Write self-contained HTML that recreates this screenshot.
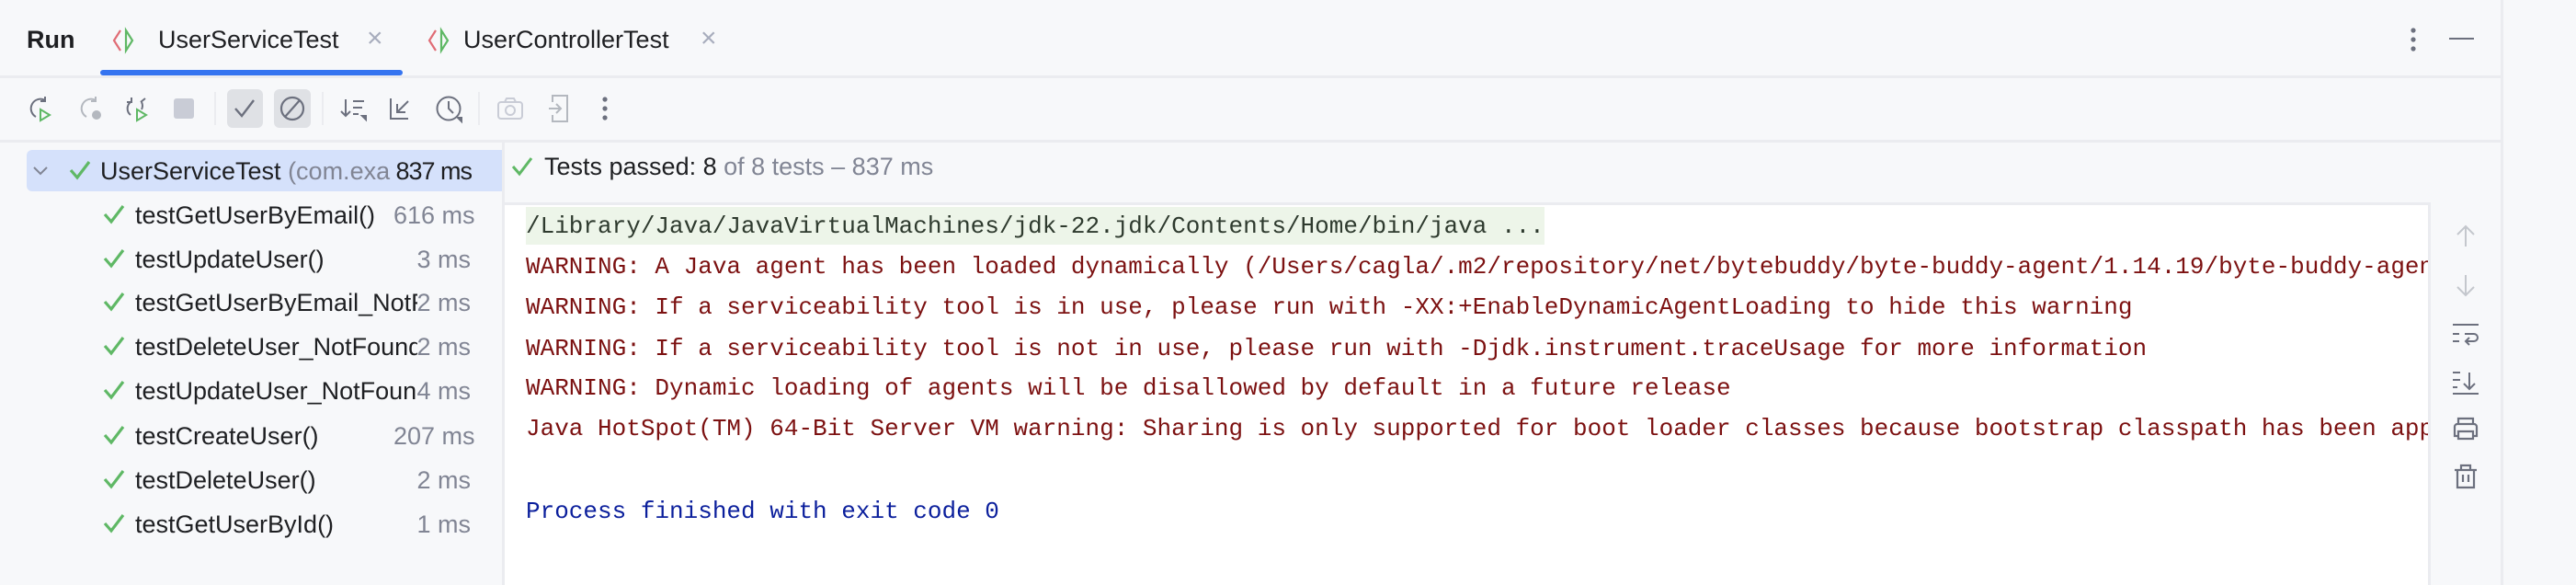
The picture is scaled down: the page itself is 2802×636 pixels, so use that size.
<!DOCTYPE html>
<html><head><meta charset="utf-8"><style>
*{margin:0;padding:0;box-sizing:border-box}
body{width:2802px;height:636px;background:#f7f8fa;position:relative;overflow:hidden;font-family:"Liberation Sans",sans-serif;color:#1e1f22}
.a{position:absolute;white-space:nowrap}
.ui{font-size:27px;line-height:32px}
.hl{position:absolute;background:#ebecf0}
.mono{font-family:"Liberation Mono",monospace;font-size:26px;line-height:30px}
.red{color:#7c1111}
.gray{color:#818594}
svg{position:absolute;overflow:visible}
.clip{overflow:hidden}
</style></head><body>
<!-- header -->
<div class="a ui" style="left:29px;top:27px;font-weight:bold">Run</div>
<svg style="left:122px;top:30px" width="26" height="28" viewBox="0 0 26 28"><path d="M9 3 L2 14 L9 25" fill="none" stroke="#e06c75" stroke-width="2.2"/><path d="M15 3 L22 14 L15 25 Z" fill="none" stroke="#5fb865" stroke-width="2.2"/></svg>
<div class="a ui" style="left:172px;top:27px">UserServiceTest</div>
<div class="a ui gray" style="left:399px;top:26px;font-size:30px;color:#a8adbd">×</div>
<div class="a" style="left:109px;top:76px;width:329px;height:6px;background:#3574f0;border-radius:3px"></div>
<svg style="left:465px;top:30px" width="26" height="28" viewBox="0 0 26 28"><path d="M9 3 L2 14 L9 25" fill="none" stroke="#e06c75" stroke-width="2.2"/><path d="M15 3 L22 14 L15 25 Z" fill="none" stroke="#5fb865" stroke-width="2.2"/></svg>
<div class="a ui" style="left:504px;top:27px">UserControllerTest</div>
<div class="a ui gray" style="left:762px;top:26px;font-size:30px;color:#a8adbd">×</div>
<svg style="left:2620px;top:29px" width="10" height="30"><circle cx="5" cy="4" r="2.6" fill="#6c707e"/><circle cx="5" cy="14" r="2.6" fill="#6c707e"/><circle cx="5" cy="24" r="2.6" fill="#6c707e"/></svg>
<div class="a" style="left:2664px;top:41px;width:27px;height:2px;background:#6c707e"></div>
<div class="hl" style="left:0;top:82px;width:2721px;height:3px"></div>
<div class="hl" style="left:2720px;top:0;width:3px;height:636px"></div>
<div class="a" style="left:2723px;top:0;width:79px;height:636px;background:#f7f8fa"></div>
<!-- toolbar -->
<div class="a" style="left:247px;top:97px;width:39px;height:42px;background:#dfe1e5;border-radius:6px"></div>
<div class="a" style="left:298px;top:97px;width:40px;height:42px;background:#dfe1e5;border-radius:6px"></div>
<div class="hl" style="left:233px;top:100px;width:2px;height:36px"></div>
<div class="hl" style="left:350px;top:100px;width:2px;height:36px"></div>
<div class="hl" style="left:520px;top:100px;width:2px;height:36px"></div>
<svg style="left:29px;top:103px" width="30" height="30" viewBox="0 0 30 30" fill="none" stroke-width="2"><path d="M20 6 A10 10 0 1 0 10 24" stroke="#6c707e"/><path d="M20 2 V7 H15" stroke="#6c707e"/><path d="M15 16 L25 22 L15 28 Z" stroke="#5fb865"/></svg>
<svg style="left:84px;top:103px" width="30" height="30" viewBox="0 0 30 30" fill="none" stroke-width="2" stroke="#b4b8bf"><path d="M20 6 A10 10 0 1 0 10 24"/><path d="M20 2 V7 H15"/><circle cx="21" cy="22" r="4" fill="#b4b8bf"/></svg>
<svg style="left:134px;top:103px" width="30" height="30" viewBox="0 0 30 30" fill="none" stroke-width="2"><path d="M8 22 A9 9 0 0 1 8 8 M4 8 H9 V3 M20 8 A9 9 0 0 1 20 16 M24 4 L19 8" stroke="#6c707e"/><path d="M15 16 L25 22 L15 28 Z" stroke="#5fb865"/></svg>
<div class="a" style="left:189px;top:107px;width:22px;height:22px;background:#c9ccd6;border-radius:3px"></div>
<svg style="left:254px;top:106px" width="26" height="24" fill="none" stroke="#6c707e" stroke-width="2.4"><path d="M2 12 L9 20 L22 3"/></svg>
<svg style="left:304px;top:104px" width="28" height="28" fill="none" stroke="#6c707e" stroke-width="2.2"><circle cx="14" cy="14" r="12"/><path d="M6 23 L22 5"/></svg>
<svg style="left:370px;top:104px" width="32" height="30" fill="none" stroke="#6c707e" stroke-width="2"><path d="M6 4 V22 M1 17 L6 22 L11 17 M14 6 H26 M14 13 H24 M14 20 H20"/><path d="M24 22 L28 22 L28 26 Z" fill="#6c707e"/></svg>
<svg style="left:422px;top:104px" width="28" height="28" fill="none" stroke="#6c707e" stroke-width="2"><path d="M3 3 V25 H22 M10 18 L22 6 M10 9 V18 H19"/></svg>
<svg style="left:473px;top:103px" width="32" height="32" fill="none" stroke="#6c707e" stroke-width="2"><circle cx="15" cy="15" r="12.5"/><path d="M15 7 V15 L20 20"/><path d="M25 25 L29 25 L29 29 Z" fill="#6c707e"/></svg>
<svg style="left:540px;top:104px" width="30" height="28" fill="none" stroke="#c9ccd6" stroke-width="2"><rect x="2" y="7" width="26" height="18" rx="3"/><path d="M9 7 L11 3 H19 L21 7"/><circle cx="15" cy="16" r="5"/></svg>
<svg style="left:595px;top:101px" width="28" height="34" fill="none" stroke="#b4b8bf" stroke-width="2"><path d="M6 10 V3 H22 V31 H6 V24 M2 17 H14 M10 12 L15 17 L10 22"/></svg>
<svg style="left:653px;top:104px" width="10" height="28"><circle cx="5" cy="4" r="2.6" fill="#6c707e"/><circle cx="5" cy="14" r="2.6" fill="#6c707e"/><circle cx="5" cy="24" r="2.6" fill="#6c707e"/></svg>
<div class="hl" style="left:0;top:152px;width:2721px;height:3px"></div>
<!-- tree -->
<div class="hl" style="left:546px;top:155px;width:3px;height:481px"></div>
<div class="a" style="left:29px;top:163px;width:517px;height:45px;background:#d5e1fb;border-radius:6px 0 0 6px"></div>
<svg style="left:36px;top:180px" width="16" height="12" fill="none" stroke="#818594" stroke-width="2"><path d="M1 2 L8 9 L15 2"/></svg>
<div class="a ui clip" style="left:109px;top:170px;width:317px">UserServiceTest <span class="gray">(com.example)</span></div>
<div class="a ui" style="left:420px;top:170px;width:93px;text-align:right;letter-spacing:-1px">837 ms</div>
<svg style="left:75px;top:174px" width="24" height="22" fill="none" stroke="#5fb865" stroke-width="3.2"><path d="M2 11 L9 19 L22 2"/></svg>

<div class="a ui clip" style="left:147px;top:218px;width:300px">testGetUserByEmail()</div><div class="a ui gray" style="left:428px;top:218px;width:84px;text-align:right">616 ms</div>
<div class="a ui clip" style="left:147px;top:266px;width:300px">testUpdateUser()</div><div class="a ui gray" style="left:428px;top:266px;width:84px;text-align:right">3 ms</div>
<div class="a ui clip" style="left:147px;top:313px;width:307px">testGetUserByEmail_NotFound()</div><div class="a ui gray" style="left:428px;top:313px;width:84px;text-align:right">2 ms</div>
<div class="a ui clip" style="left:147px;top:361px;width:307px">testDeleteUser_NotFound()</div><div class="a ui gray" style="left:428px;top:361px;width:84px;text-align:right">2 ms</div>
<div class="a ui clip" style="left:147px;top:409px;width:307px">testUpdateUser_NotFound()</div><div class="a ui gray" style="left:428px;top:409px;width:84px;text-align:right">4 ms</div>
<div class="a ui clip" style="left:147px;top:458px;width:300px">testCreateUser()</div><div class="a ui gray" style="left:428px;top:458px;width:84px;text-align:right">207 ms</div>
<div class="a ui clip" style="left:147px;top:506px;width:300px">testDeleteUser()</div><div class="a ui gray" style="left:428px;top:506px;width:84px;text-align:right">2 ms</div>
<div class="a ui clip" style="left:147px;top:554px;width:300px">testGetUserById()</div><div class="a ui gray" style="left:428px;top:554px;width:84px;text-align:right">1 ms</div>
<svg style="left:112px;top:222px" width="24" height="22" fill="none" stroke="#5fb865" stroke-width="3.2"><path d="M2 11 L9 19 L22 2"/></svg>
<svg style="left:112px;top:270px" width="24" height="22" fill="none" stroke="#5fb865" stroke-width="3.2"><path d="M2 11 L9 19 L22 2"/></svg>
<svg style="left:112px;top:317px" width="24" height="22" fill="none" stroke="#5fb865" stroke-width="3.2"><path d="M2 11 L9 19 L22 2"/></svg>
<svg style="left:112px;top:365px" width="24" height="22" fill="none" stroke="#5fb865" stroke-width="3.2"><path d="M2 11 L9 19 L22 2"/></svg>
<svg style="left:112px;top:413px" width="24" height="22" fill="none" stroke="#5fb865" stroke-width="3.2"><path d="M2 11 L9 19 L22 2"/></svg>
<svg style="left:112px;top:462px" width="24" height="22" fill="none" stroke="#5fb865" stroke-width="3.2"><path d="M2 11 L9 19 L22 2"/></svg>
<svg style="left:112px;top:510px" width="24" height="22" fill="none" stroke="#5fb865" stroke-width="3.2"><path d="M2 11 L9 19 L22 2"/></svg>
<svg style="left:112px;top:558px" width="24" height="22" fill="none" stroke="#5fb865" stroke-width="3.2"><path d="M2 11 L9 19 L22 2"/></svg>
<!-- status -->
<svg style="left:556px;top:170px" width="24" height="22" fill="none" stroke="#5fb865" stroke-width="3"><path d="M2 11 L9 19 L22 2"/></svg>
<div class="a ui" style="left:592px;top:165px">Tests passed: 8 <span class="gray">of 8 tests – 837 ms</span></div>
<!-- console -->
<div class="hl" style="left:549px;top:220px;width:2095px;height:3px"></div>
<div class="a clip" style="left:549px;top:223px;width:2092px;height:413px;background:#fff">
<div class="a" style="left:23px;top:2px;width:1108px;height:41px;background:#edf5e9"></div>
<div class="a mono" style="left:23px;top:8px;color:#2e3a2e">/Library/Java/JavaVirtualMachines/jdk-22.jdk/Contents/Home/bin/java ...</div>
<div class="a mono red" style="left:23px;top:52px">WARNING: A Java agent has been loaded dynamically (/Users/cagla/.m2/repository/net/bytebuddy/byte-buddy-agent/1.14.19/byte-buddy-agent-1.14.19.jar)</div>
<div class="a mono red" style="left:23px;top:96px">WARNING: If a serviceability tool is in use, please run with -XX:+EnableDynamicAgentLoading to hide this warning</div>
<div class="a mono red" style="left:23px;top:141px">WARNING: If a serviceability tool is not in use, please run with -Djdk.instrument.traceUsage for more information</div>
<div class="a mono red" style="left:23px;top:184px">WARNING: Dynamic loading of agents will be disallowed by default in a future release</div>
<div class="a mono red" style="left:23px;top:228px">Java HotSpot(TM) 64-Bit Server VM warning: Sharing is only supported for boot loader classes because bootstrap classpath has been appended</div>
<div class="a mono" style="left:23px;top:318px;color:#0b1f9c">Process finished with exit code 0</div>
</div>
<div class="hl" style="left:2641px;top:223px;width:3px;height:413px"></div>
<!-- right gutter icons -->
<svg style="left:2670px;top:244px" width="24" height="26" fill="none" stroke="#c4c7cd" stroke-width="2"><path d="M12 2 V24 M3 11 L12 2 L21 11"/></svg>
<svg style="left:2670px;top:297px" width="24" height="26" fill="none" stroke="#c4c7cd" stroke-width="2"><path d="M12 2 V24 M3 15 L12 24 L21 15"/></svg>
<svg style="left:2667px;top:351px" width="30" height="24" fill="none" stroke="#6c707e" stroke-width="2"><path d="M1 2 H29 M1 12 H8 M1 20 H8 M14 12 H24 A4 4 0 0 1 24 20 H16 M19 16 L15 20 L19 24"/></svg>
<svg style="left:2667px;top:403px" width="30" height="26" fill="none" stroke="#6c707e" stroke-width="2"><path d="M1 2 H9 M1 10 H9 M1 18 H6 M1 25 H29 M19 2 V20 M13 14 L19 20 L25 14"/></svg>
<svg style="left:2667px;top:453px" width="30" height="26" fill="none" stroke="#6c707e" stroke-width="2.2"><path d="M7 8 V2 H23 V8 M7 21 H3 V11 A3 3 0 0 1 6 8 H24 A3 3 0 0 1 27 11 V21 H23 M7 16 H23 V24 H7 Z"/></svg>
<svg style="left:2669px;top:504px" width="26" height="28" fill="none" stroke="#6c707e" stroke-width="2.2"><path d="M1 7 H25 M8 7 V2 H18 V7 M4 7 V26 H22 V7 M10 12 V20 M16 12 V20"/></svg>
</body></html>
